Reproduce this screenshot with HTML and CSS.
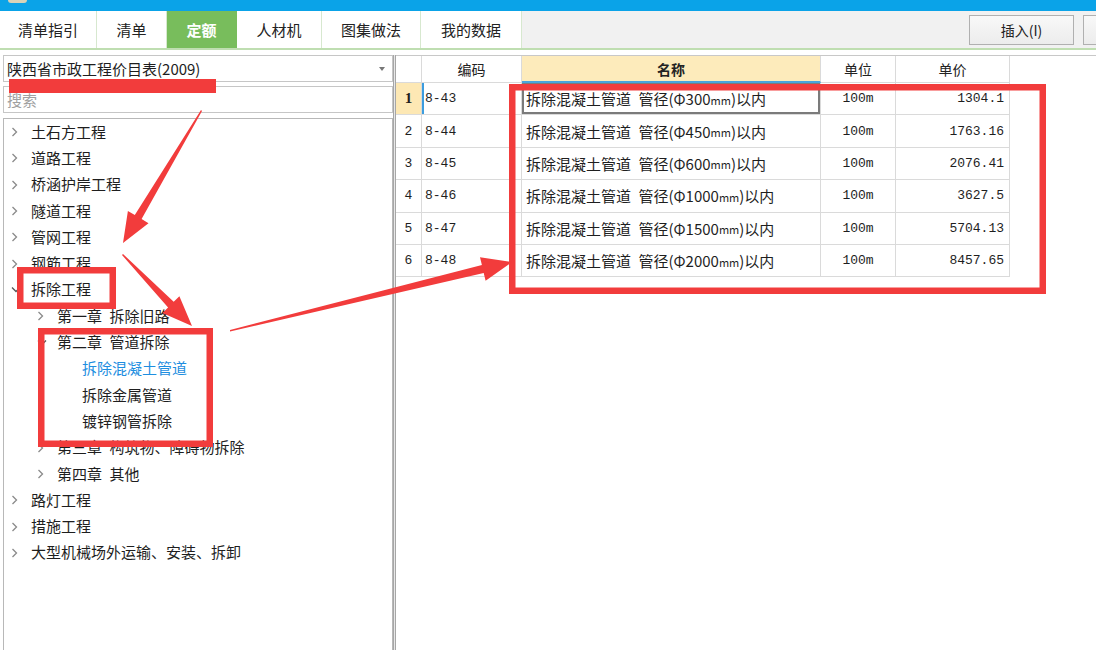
FILE: index.html
```html
<!DOCTYPE html>
<html>
<head>
<meta charset="utf-8">
<link rel="stylesheet" href="styles.css">
</head>
<body>
<div class="app">
  <div class="titlebar"><span class="logo"></span></div>
  <div class="tabbar">
    <div class="tab t1">清单指引</div>
    <div class="tab t2">清单</div>
    <div class="tab t3 active">定额</div>
    <div class="tab t4">人材机</div>
    <div class="tab t5">图集做法</div>
    <div class="tab t6">我的数据</div>
    <div class="tools">
      <button class="btn">插入(I)</button>
      <button class="btn"></button>
    </div>
  </div>
  <div class="main">
    <div class="left">
      <div class="combo"><span class="combo-text">陕西省市政工程价目表(2009)</span><span class="combo-arrow"></span></div>
      <div class="search">搜索</div>
      <div class="tree">
        <div class="node l1"><span class="chev"><svg width="7" height="10" viewBox="0 0 7 10"><polyline points="1.5,1 5.5,5 1.5,9" fill="none" stroke="#8a8a8a" stroke-width="1.3"/></svg></span>土石方工程</div>
        <div class="node l1"><span class="chev"><svg width="7" height="10" viewBox="0 0 7 10"><polyline points="1.5,1 5.5,5 1.5,9" fill="none" stroke="#8a8a8a" stroke-width="1.3"/></svg></span>道路工程</div>
        <div class="node l1"><span class="chev"><svg width="7" height="10" viewBox="0 0 7 10"><polyline points="1.5,1 5.5,5 1.5,9" fill="none" stroke="#8a8a8a" stroke-width="1.3"/></svg></span>桥涵护岸工程</div>
        <div class="node l1"><span class="chev"><svg width="7" height="10" viewBox="0 0 7 10"><polyline points="1.5,1 5.5,5 1.5,9" fill="none" stroke="#8a8a8a" stroke-width="1.3"/></svg></span>隧道工程</div>
        <div class="node l1"><span class="chev"><svg width="7" height="10" viewBox="0 0 7 10"><polyline points="1.5,1 5.5,5 1.5,9" fill="none" stroke="#8a8a8a" stroke-width="1.3"/></svg></span>管网工程</div>
        <div class="node l1"><span class="chev"><svg width="7" height="10" viewBox="0 0 7 10"><polyline points="1.5,1 5.5,5 1.5,9" fill="none" stroke="#8a8a8a" stroke-width="1.3"/></svg></span>钢筋工程</div>
        <div class="node l1"><span class="chev"><svg width="10" height="7" viewBox="0 0 10 7"><polyline points="1,1.5 5,5.5 9,1.5" fill="none" stroke="#555" stroke-width="1.3"/></svg></span>拆除工程</div>
        <div class="node l2"><span class="chev"><svg width="7" height="10" viewBox="0 0 7 10"><polyline points="1.5,1 5.5,5 1.5,9" fill="none" stroke="#8a8a8a" stroke-width="1.3"/></svg></span>第一章&ensp;拆除旧路</div>
        <div class="node l2"><span class="chev"><svg width="10" height="7" viewBox="0 0 10 7"><polyline points="1,1.5 5,5.5 9,1.5" fill="none" stroke="#555" stroke-width="1.3"/></svg></span>第二章&ensp;管道拆除</div>
        <div class="node l3 selected">拆除混凝土管道</div>
        <div class="node l3">拆除金属管道</div>
        <div class="node l3">镀锌钢管拆除</div>
        <div class="node l2"><span class="chev"><svg width="7" height="10" viewBox="0 0 7 10"><polyline points="1.5,1 5.5,5 1.5,9" fill="none" stroke="#8a8a8a" stroke-width="1.3"/></svg></span>第三章&ensp;构筑物、障碍物拆除</div>
        <div class="node l2"><span class="chev"><svg width="7" height="10" viewBox="0 0 7 10"><polyline points="1.5,1 5.5,5 1.5,9" fill="none" stroke="#8a8a8a" stroke-width="1.3"/></svg></span>第四章&ensp;其他</div>
        <div class="node l1"><span class="chev"><svg width="7" height="10" viewBox="0 0 7 10"><polyline points="1.5,1 5.5,5 1.5,9" fill="none" stroke="#8a8a8a" stroke-width="1.3"/></svg></span>路灯工程</div>
        <div class="node l1"><span class="chev"><svg width="7" height="10" viewBox="0 0 7 10"><polyline points="1.5,1 5.5,5 1.5,9" fill="none" stroke="#8a8a8a" stroke-width="1.3"/></svg></span>措施工程</div>
        <div class="node l1"><span class="chev"><svg width="7" height="10" viewBox="0 0 7 10"><polyline points="1.5,1 5.5,5 1.5,9" fill="none" stroke="#8a8a8a" stroke-width="1.3"/></svg></span>大型机械场外运输、安装、拆卸</div>
      </div>
    </div>
    <div class="splitter"></div>
    <div class="right">
      <div class="grid">
        <div class="hd"></div>
        <div class="hd">编码</div>
        <div class="hd name-hd">名称</div>
        <div class="hd">单位</div>
        <div class="hd">单价</div>

        <div class="c num cur">1</div>
        <div class="c code curcode">8-43</div>
        <div class="c name sel">拆除混凝土管道&ensp;管径(Φ300<span class="mm">mm</span>)以内</div>
        <div class="c unit">100m</div>
        <div class="c price">1304.1</div>

        <div class="c num">2</div>
        <div class="c code">8-44</div>
        <div class="c name">拆除混凝土管道&ensp;管径(Φ450<span class="mm">mm</span>)以内</div>
        <div class="c unit">100m</div>
        <div class="c price">1763.16</div>

        <div class="c num">3</div>
        <div class="c code">8-45</div>
        <div class="c name">拆除混凝土管道&ensp;管径(Φ600<span class="mm">mm</span>)以内</div>
        <div class="c unit">100m</div>
        <div class="c price">2076.41</div>

        <div class="c num">4</div>
        <div class="c code">8-46</div>
        <div class="c name">拆除混凝土管道&ensp;管径(Φ1000<span class="mm">mm</span>)以内</div>
        <div class="c unit">100m</div>
        <div class="c price">3627.5</div>

        <div class="c num">5</div>
        <div class="c code">8-47</div>
        <div class="c name">拆除混凝土管道&ensp;管径(Φ1500<span class="mm">mm</span>)以内</div>
        <div class="c unit">100m</div>
        <div class="c price">5704.13</div>

        <div class="c num">6</div>
        <div class="c code">8-48</div>
        <div class="c name">拆除混凝土管道&ensp;管径(Φ2000<span class="mm">mm</span>)以内</div>
        <div class="c unit">100m</div>
        <div class="c price">8457.65</div>
      </div>
    </div>
  </div>

  <svg class="overlay" width="1096" height="650" viewBox="0 0 1096 650">
    <rect x="9" y="79" width="207" height="14" fill="#f23c3c"/>
    <g fill="none" stroke="#f23c3c" stroke-width="6.5">
      <rect x="20.25" y="270.25" width="92.5" height="35.5"/>
      <rect x="41.25" y="331.25" width="168.5" height="112.5"/>
      <rect x="512.25" y="87.25" width="530.5" height="203.5"/>
    </g>
    <g fill="#f23c3c">
      <polygon points="201,110 202,111 141.6,219.1 148.5,223.2 123,243 127.9,211 134.8,215.1"/>
      <polygon points="122,255 123,254 173.7,301.8 179.4,296.2 192,326 162.4,313 168.1,307.4"/>
      <polygon points="230,330 230,331.5 483.7,272.9 485.6,280.7 512,262 480,257.3 481.9,265.1"/>
    </g>
  </svg>
</div>
</body>
</html>
```

FILE: styles.css
```css
* { box-sizing: border-box; }
html, body { margin: 0; padding: 0; }
body {
  width: 1096px;
  height: 650px;
  overflow: hidden;
  background: #ffffff;
  font-family: "Noto Sans CJK SC", "Liberation Sans", sans-serif;
  color: #1e1e1e;
}
.app {
  position: relative;
  width: 1096px;
  height: 650px;
  display: flex;
  flex-direction: column;
}
.titlebar {
  height: 11px;
  background: #0aa3e8;
  flex: none;
  position: relative;
}
.logo {
  position: absolute;
  left: 8px;
  top: -6px;
  width: 19px;
  height: 9px;
  border-radius: 3px;
  background: #d9d3b8;
}
.tabbar {
  height: 39px;
  flex: none;
  display: flex;
  background: #f1f1f1;
  border-bottom: 2px solid #bfdeb1;
  overflow: hidden;
}
.tab {
  flex: none;
  display: flex;
  align-items: center;
  justify-content: center;
  background: #ffffff;
  border-right: 1px solid #d7e8cf;
  font-size: 15px;
  color: #222;
  padding-bottom: 1px;
}
.t1 { width: 97px; }
.t2 { width: 70px; }
.t3 { width: 70px; }
.t4 { width: 85px; }
.t5 { width: 99px; }
.t6 { width: 101px; }
.tab.active {
  background: #78bd5c;
  color: #ffffff;
  font-weight: bold;
  border-right-color: #78bd5c;
}
.tools {
  display: flex;
  gap: 9px;
  margin-left: 447px;
  padding-top: 4px;
  flex: none;
}
.btn {
  width: 105px;
  height: 30px;
  flex: none;
  border: 1px solid #b0b0b0;
  background: linear-gradient(#f8f8f8, #ececec);
  font-family: "Noto Sans CJK SC", "Liberation Sans", sans-serif;
  font-size: 14px;
  color: #222;
  padding: 0;
}
.main {
  flex: 1;
  display: flex;
  padding-top: 5px;
  min-height: 0;
}
.left {
  width: 393px;
  flex: none;
  padding-left: 3px;
  display: flex;
  flex-direction: column;
}
.combo {
  height: 27px;
  border: 1px solid #c6c6c6;
  display: flex;
  align-items: center;
  justify-content: space-between;
  padding: 0 7px 0 3px;
  font-size: 15px;
  color: #1e1e1e;
}
.combo-arrow {
  width: 0;
  height: 0;
  border-left: 3.5px solid transparent;
  border-right: 3.5px solid transparent;
  border-top: 4px solid #777;
}
.search {
  margin-top: 4px;
  height: 27px;
  border: 1px solid #c6c6c6;
  padding-left: 3px;
  display: flex;
  align-items: center;
  font-size: 15px;
  color: #a0a0a0;
}
.tree {
  margin-top: 5px;
  flex: 1;
  border: 1px solid #b8b8b8;
  border-bottom: none;
  padding-top: 0;
}
.node {
  height: 26.3px;
  display: flex;
  align-items: center;
  font-size: 15px;
  color: #1e1e1e;
  white-space: nowrap;
  padding-bottom: 2px;
}
.chev {
  width: 20px;
  flex: none;
  display: flex;
  align-items: center;
  padding-top: 2px;
}
.chev svg { display: block; }
.l1 { padding-left: 7px; }
.l2 { padding-left: 33px; }
.l3 { padding-left: 78px; }
.node.selected { color: #1e8ee0; }
.splitter {
  width: 3px;
  flex: none;
  border-left: 1px solid #a6a6a6;
  border-right: 1px solid #a6a6a6;
  background: #e8e8e8;
}
.right {
  flex: 1;
  border-top: 1px solid #c8c8c8;
}
.grid {
  display: grid;
  grid-template-columns: 26px 100px 299px 75px 114px;
  grid-template-rows: 27px repeat(6, 32.4px);
}
.hd {
  border-right: 1px solid #dadada;
  border-bottom: 1px solid #dadada;
  display: flex;
  align-items: center;
  justify-content: center;
  font-size: 14px;
  color: #222;
}
.name-hd {
  background: #fdebbb;
  font-weight: bold;
  border-bottom: 2px solid #49a5dd;
}
.c {
  border-right: 1px solid #dadada;
  border-bottom: 1px solid #dadada;
  display: flex;
  align-items: center;
  white-space: nowrap;
  overflow: hidden;
}
.num {
  justify-content: center;
  font-family: "Liberation Mono", monospace;
  font-size: 13px;
}
.num.cur {
  background: #fde8b4;
  font-family: "Liberation Serif", serif;
  font-weight: bold;
  font-size: 15px;
}
.code {
  padding-left: 3px;
  font-family: "Liberation Mono", monospace;
  font-size: 13px;
}
.curcode { box-shadow: inset 2px 0 0 #3c9ddf; }
.name {
  padding-left: 4px;
  font-size: 15px;
}
.mm {
  font-size: 11px;
  padding-top: 2px;
}
.sel { box-shadow: inset 0 0 0 2px #7b7b7b; }
.unit {
  justify-content: center;
  font-family: "Liberation Mono", monospace;
  font-size: 13px;
}
.price {
  justify-content: flex-end;
  padding-right: 5px;
  font-family: "Liberation Mono", monospace;
  font-size: 13px;
}
.overlay {
  position: absolute;
  left: 0;
  top: 0;
  pointer-events: none;
}
```
